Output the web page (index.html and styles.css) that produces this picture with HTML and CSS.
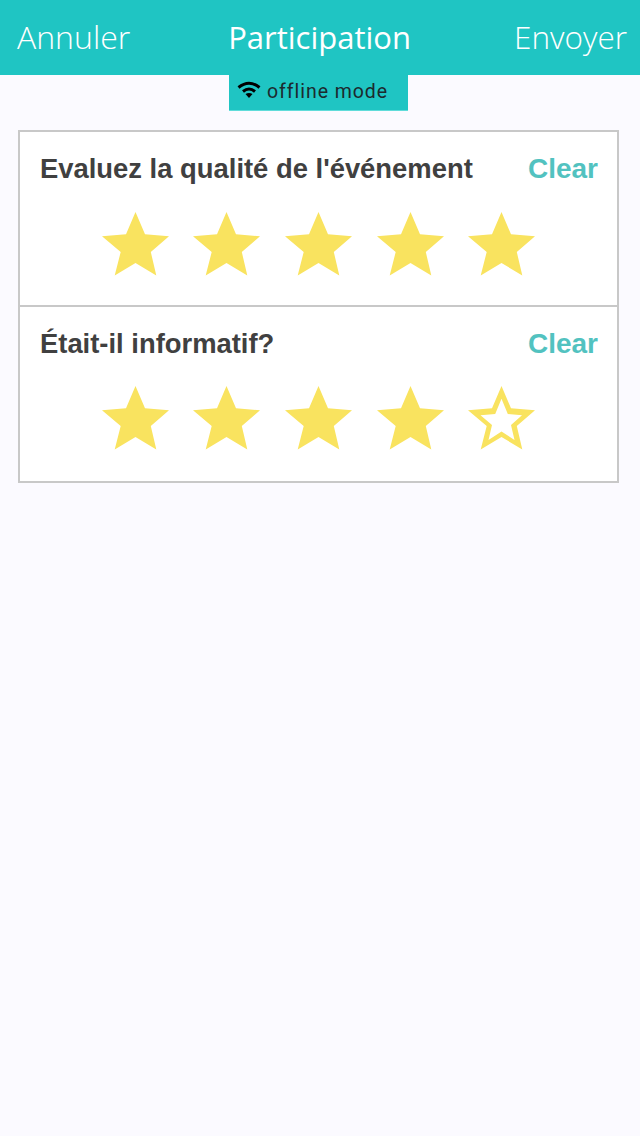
FILE: index.html
```html
<!DOCTYPE html>
<html lang="fr">
<head>
  <meta charset="UTF-8">
  <meta name="viewport" content="width=device-width, initial-scale=1.0">
  <title>Participation</title>
  <link rel="stylesheet" href="styles.css">
</head>
<body>

  <!-- Top bar -->
  <header class="header">
    <a class="header-link">Annuler</a>
    <div class="header-title">Participation</div>
    <a class="header-link header-send">Envoyer</a>
  </header>

  <!-- Offline banner -->
  <div class="offline-wrap">
    <div class="offline-banner">
      <svg class="wifi-icon" viewBox="0 0 24 17">
        <path class="wifi-arc" d="M1.500 6.500Q12 -2 22.500 6.500"/>
        <path class="wifi-arc" d="M6 10.500Q12 5.500 18 10.500"/>
        <path d="M8.500 13Q12 11 15.500 13L12 17z"/>
      </svg>
      <span class="offline-text">offline mode</span>
    </div>
  </div>

  <!-- Rating card -->
  <main class="card">
    <section class="question">
      <div class="question-head">
        <h2 class="question-title">Evaluez la qualité de l'événement</h2>
        <a class="clear-link">Clear</a>
      </div>
      <div class="stars">
        <svg class="star" viewBox="0 0 67 64"><path d="M33.500 0L43 22.300 67 24.300 48.800 40 54.300 63.500 33.500 51 12.700 63.500 18.700 40 0 24.300 24 22.300z"/></svg>
        <svg class="star" viewBox="0 0 67 64"><path d="M33.500 0L43 22.300 67 24.300 48.800 40 54.300 63.500 33.500 51 12.700 63.500 18.700 40 0 24.300 24 22.300z"/></svg>
        <svg class="star" viewBox="0 0 67 64"><path d="M33.500 0L43 22.300 67 24.300 48.800 40 54.300 63.500 33.500 51 12.700 63.500 18.700 40 0 24.300 24 22.300z"/></svg>
        <svg class="star" viewBox="0 0 67 64"><path d="M33.500 0L43 22.300 67 24.300 48.800 40 54.300 63.500 33.500 51 12.700 63.500 18.700 40 0 24.300 24 22.300z"/></svg>
        <svg class="star" viewBox="0 0 67 64"><path d="M33.500 0L43 22.300 67 24.300 48.800 40 54.300 63.500 33.500 51 12.700 63.500 18.700 40 0 24.300 24 22.300z"/></svg>
      </div>
    </section>
    <section class="question">
      <div class="question-head">
        <h2 class="question-title">Était-il informatif?</h2>
        <a class="clear-link">Clear</a>
      </div>
      <div class="stars">
        <svg class="star" viewBox="0 0 67 64"><path d="M33.500 0L43 22.300 67 24.300 48.800 40 54.300 63.500 33.500 51 12.700 63.500 18.700 40 0 24.300 24 22.300z"/></svg>
        <svg class="star" viewBox="0 0 67 64"><path d="M33.500 0L43 22.300 67 24.300 48.800 40 54.300 63.500 33.500 51 12.700 63.500 18.700 40 0 24.300 24 22.300z"/></svg>
        <svg class="star" viewBox="0 0 67 64"><path d="M33.500 0L43 22.300 67 24.300 48.800 40 54.300 63.500 33.500 51 12.700 63.500 18.700 40 0 24.300 24 22.300z"/></svg>
        <svg class="star" viewBox="0 0 67 64"><path d="M33.500 0L43 22.300 67 24.300 48.800 40 54.300 63.500 33.500 51 12.700 63.500 18.700 40 0 24.300 24 22.300z"/></svg>
        <svg class="star" viewBox="0 0 67 64"><path fill-rule="evenodd" d="M33.500 0L43 22.300 67 24.300 48.800 40 54.300 63.500 33.500 51 12.700 63.500 18.700 40 0 24.300 24 22.300zM33.500 12.700L39.800 28 54 29.200 43 39 46.500 54 33.500 45.500 20.500 54 24 39 12.500 29.200 27.200 28z"/></svg>
      </div>
    </section>
  </main>

</body>
</html>
```

FILE: styles.css
```css
/* Base styles */
* {
  margin: 0;
  padding: 0;
  box-sizing: border-box;
}

body {
  font-family: 'Liberation Sans', Arial, sans-serif;
  background-color: #fbfaff;
  color: #404040;
  min-height: 100vh;
}

/* Header */
.header {
  height: 75px;
  background-color: #1fc5c3;
  color: #ffffff;
  display: flex;
  justify-content: space-between;
  align-items: center;
  padding: 0 13px 2px 17px;
  font-family: 'Open Sans', sans-serif;
}

.header-link {
  font-size: 32px;
  font-weight: 300;
}

.header-send {
  font-size: 31.500px;
}

.header-title {
  font-size: 31px;
  font-weight: 500;
  margin-right: 5px;
}

/* Offline banner */
.offline-wrap {
  display: flex;
  justify-content: center;
  padding-right: 3px;
}

.offline-banner {
  width: 179px;
  height: 36px;
  background-color: #1fc5c3;
  border-bottom: 1px solid #5fdcda;
  display: flex;
  align-items: center;
  gap: 6px;
  padding: 0 0 2px 8px;
  color: #1c2a2e;
}

.wifi-icon {
  width: 24px;
  height: 17px;
  margin-bottom: 4px;
  fill: #000000;
}

.wifi-arc {
  fill: none;
  stroke: #000000;
  stroke-width: 3;
}

.offline-text {
  font-family: 'Roboto', sans-serif;
  font-size: 19.500px;
  letter-spacing: 0.950px;
}

/* Rating card */
.card {
  margin: 19px 21px 0 18px;
  background-color: #ffffff;
  border: 2px solid #c8c8c8;
}

.question {
  height: 173px;
  padding: 20px 20px 0 20px;
}

.question + .question {
  border-top: 2px solid #c8c8c8;
  height: 176px;
}

.question-head {
  display: flex;
  justify-content: space-between;
  align-items: center;
  height: 34px;
}

.question-title {
  font-size: 27.400px;
  font-weight: 700;
  color: #404040;
}

.clear-link {
  font-size: 28px;
  font-weight: 700;
  color: #52c2c0;
  margin-right: -1px;
}

.stars {
  display: flex;
  justify-content: center;
  gap: 24.600px;
  margin-top: 26px;
}

.question + .question .stars {
  margin-top: 25px;
}

.star {
  width: 67px;
  height: 64px;
  fill: #f9e35f;
}
```
